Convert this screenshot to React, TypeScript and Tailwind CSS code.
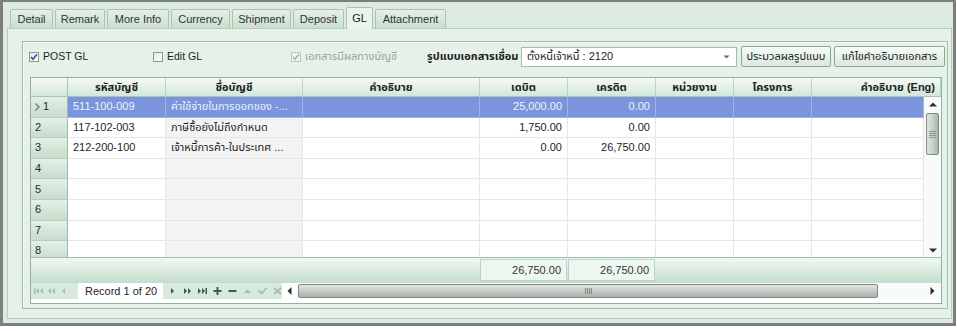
import React from "react";

const tabs = [
  { label: "Detail", w: "w-[43px]" },
  { label: "Remark", w: "w-[50px]" },
  { label: "More Info", w: "w-[62px]" },
  { label: "Currency", w: "w-[59px]" },
  { label: "Shipment", w: "w-[59px]" },
  { label: "Deposit", w: "w-[51px]" },
  { label: "GL", w: "w-[27px]", active: true },
  { label: "Attachment", w: "w-[71px]" },
];

type Col = { head: string; w: string; hw: string; right?: boolean; gray?: boolean; headRight?: boolean };
const cols: Col[] = [
  { head: "รหัสบัญชี", w: "w-[98px]", hw: "w-[98px]" },
  { head: "ชื่อบัญชี", w: "w-[137px]", hw: "w-[137px]", gray: true },
  { head: "คำอธิบาย", w: "w-[177px]", hw: "w-[177px]" },
  { head: "เดบิต", w: "w-[88px]", hw: "w-[88px]", right: true },
  { head: "เครดิต", w: "w-[88px]", hw: "w-[88px]", right: true },
  { head: "หน่วยงาน", w: "w-[78px]", hw: "w-[78px]" },
  { head: "โครงการ", w: "w-[78px]", hw: "w-[78px]" },
  { head: "คำอธิบาย (Eng)", w: "w-[112px]", hw: "flex-1", headRight: true },
];

const rows: string[][] = [
  ["511-100-009", "ค่าใช้จ่ายในการออกของ  -...", "", "25,000.00", "0.00", "", "", ""],
  ["117-102-003", "ภาษีซื้อยังไม่ถึงกำหนด", "", "1,750.00", "0.00", "", "", ""],
  ["212-200-100", "เจ้าหนี้การค้า-ในประเทศ   ...", "", "0.00", "26,750.00", "", "", ""],
  ["", "", "", "", "", "", "", ""],
  ["", "", "", "", "", "", "", ""],
  ["", "", "", "", "", "", "", ""],
  ["", "", "", "", "", "", "", ""],
  ["", "", "", "", "", "", "", ""],
];

function Check({ checked, disabled }: { checked?: boolean; disabled?: boolean }) {
  return (
    <div
      className={
        "w-[10px] h-[10px] border flex items-center justify-center " +
        (disabled ? "border-[#b9c6bd] bg-[#f1f4f2]" : "border-[#8a9a90] bg-gradient-to-br from-[#e4e8e6] to-white")
      }
    >
      {checked && (
        <svg width="8" height="8" viewBox="0 0 8 8">
          <path
            d="M1 4 L3 6.2 L7 1.2"
            fill="none"
            stroke={disabled ? "#a8b3ac" : "#3552a6"}
            strokeWidth="1.6"
          />
        </svg>
      )}
    </div>
  );
}

const dark = "#3f5c48";
const dim = "#a7bcae";

function NavIcon({ kind }: { kind: string }) {
  const c = ["next", "nextpage", "last", "plus", "minus"].includes(kind) ? dark : dim;
  let el: React.ReactNode = null;
  switch (kind) {
    case "first":
      el = (
        <g fill={c}>
          <rect x="0" y="1" width="1.5" height="6" />
          <path d="M5 1 L2 4 L5 7Z" />
          <path d="M9 1 L6 4 L9 7Z" />
        </g>
      );
      break;
    case "prevpage":
      el = (
        <g fill={c}>
          <path d="M4 1 L1 4 L4 7Z" />
          <path d="M8 1 L5 4 L8 7Z" />
        </g>
      );
      break;
    case "prev":
      el = <path d="M5 1 L2 4 L5 7Z" fill={c} />;
      break;
    case "next":
      el = <path d="M3 1 L6 4 L3 7Z" fill={c} />;
      break;
    case "nextpage":
      el = (
        <g fill={c}>
          <path d="M1 1 L4 4 L1 7Z" />
          <path d="M5 1 L8 4 L5 7Z" />
        </g>
      );
      break;
    case "last":
      el = (
        <g fill={c}>
          <path d="M0 1 L3 4 L0 7Z" />
          <path d="M4 1 L7 4 L4 7Z" />
          <rect x="7.5" y="1" width="1.5" height="6" />
        </g>
      );
      break;
    case "plus":
      el = (
        <g fill={c}>
          <rect x="0.5" y="3" width="8" height="2" />
          <rect x="3.5" y="0" width="2" height="8" />
        </g>
      );
      break;
    case "minus":
      el = <rect x="0.5" y="3" width="8" height="2" fill={c} />;
      break;
    case "up":
      el = <path d="M1 6 L4.5 2.5 L8 6Z" fill={c} />;
      break;
    case "ok":
      el = <path d="M0.5 3.5 L3.5 6.5 L8.5 1" fill="none" stroke={c} strokeWidth="1.8" />;
      break;
    case "cancel":
      el = <path d="M1 1 L8 7 M8 1 L1 7" fill="none" stroke={c} strokeWidth="1.8" />;
      break;
  }
  return (
    <svg width="9" height="8" viewBox="0 0 9 8">
      {el}
    </svg>
  );
}

export default function App() {
  return (
    <div className="w-[957px] h-[331px] bg-white font-['Liberation_Sans','Noto_Sans_Thai','Tahoma','DejaVu_Sans',sans-serif] text-[11px] text-[#1e1e1e] leading-none">
      <div className="w-[956px] h-[326px] border-x-[3px] border-t-2 border-b-[3px] border-[#7e7e7e] bg-[#dbebe0] flex flex-col">
        {/* Tabs */}
        <div className="h-[26px] flex items-end pl-[7px] gap-[2px] relative z-10">
          {tabs.map((t) =>
            t.active ? (
              <div
                key={t.label}
                className={
                  t.w +
                  " h-[22px] -mb-px border border-b-0 border-[#a9c4b1] rounded-t-[2px] bg-[#e9f4ec] flex items-center justify-center text-[#1b1b1b]"
                }
              >
                {t.label}
              </div>
            ) : (
              <div
                key={t.label}
                className={
                  t.w +
                  " h-[19px] border border-b-0 border-[#a9c4b1] rounded-t-[2px] bg-gradient-to-b from-[#e4f0e8] to-[#c9dfcf] flex items-center justify-center text-[#333]"
                }
              >
                {t.label}
              </div>
            )
          )}
        </div>

        {/* Tab panel */}
        <div className="ml-[4px] mr-[1px] mb-[4px] flex-1 border border-[#b3cdb9] bg-[#e5f1e9] pt-[12px] pl-[14px] pr-[3px] pb-[9px] flex flex-col">
          {/* Group box */}
          <div className="flex-1 border border-[#9fbda8] flex flex-col pt-[4px] pb-[4px] pl-[7px] pr-[5px] shadow-[inset_1px_1px_0_#f4faf6]">
            {/* controls row */}
            <div className="h-[21px] flex items-center -ml-px -mr-[4px]">
              <div className="w-[124px] flex items-center gap-[4px]">
                <Check checked />
                <span className="text-[10.5px]">POST GL</span>
              </div>
              <div className="w-[138px] flex items-center gap-[4px]">
                <Check />
                <span className="text-[10.5px]">Edit GL</span>
              </div>
              <div className="w-[136px] flex items-center gap-[4px]">
                <Check checked disabled />
                <span className="text-[#98a69d]">เอกสารมีผลทางบัญชี</span>
              </div>
              <div className="w-[94px] font-bold whitespace-nowrap">รูปแบบเอกสารเชื่อม</div>
              <div className="w-[216px] h-[20px] border border-[#a5bcad] bg-white flex items-center pl-[5px] pr-[6px]">
                <span className="flex-1">ตั้งหนี้เจ้าหนี้ : 2120</span>
                <svg width="7" height="4" viewBox="0 0 7 4">
                  <path d="M0.5 0.5 L3.5 3.5 L6.5 0.5Z" fill="#6b6b6b" />
                </svg>
              </div>
              <div className="ml-[4px] w-[90px] h-[21px] border border-[#8da795] rounded-[2px] bg-gradient-to-b from-[#f7fbf8] to-[#d9e9de] flex items-center justify-center whitespace-nowrap">
                ประมวลผลรูปแบบ
              </div>
              <div className="ml-[3px] w-[111px] h-[21px] border border-[#8da795] rounded-[2px] bg-gradient-to-b from-[#f7fbf8] to-[#d9e9de] flex items-center justify-center whitespace-nowrap">
                แก้ไขคำอธิบายเอกสาร
              </div>
            </div>

            {/* Grid */}
            <div className="mt-[10px] flex-1 border border-[#8fb29a] flex flex-col bg-white">
              {/* header */}
              <div className="h-[19px] flex bg-gradient-to-b from-[#f5faf6] to-[#d3e7d9] border-b border-[#a9c6b1] font-bold text-[#222]">
                <div className="w-[37px] border-r border-[#aac6b2]" />
                {cols.map((c) => (
                  <div
                    key={c.head}
                    className={
                      c.hw +
                      " border-r border-[#bcd4c3] flex items-center px-[5px] whitespace-nowrap " +
                      (c.headRight ? "justify-end" : "justify-center")
                    }
                  >
                    {c.head}
                  </div>
                ))}
              </div>

              {/* body */}
              <div className="h-[160px] flex overflow-hidden">
                <div className="flex-1 flex flex-col overflow-hidden">
                  {rows.map((r, i) => {
                    const sel = i === 0;
                    return (
                      <div key={i} className="h-[20.6px] shrink-0 flex">
                        <div className="w-[37px] border-r border-b border-r-[#9dbba6] border-b-[#b7cfbd] bg-gradient-to-b from-[#e3f0e7] to-[#c6ddcc] flex items-center pl-[4px] text-[#2a2a2a] gap-[3px]">
                          {sel && (
                            <svg width="5" height="8" viewBox="0 0 5 8">
                              <path d="M0.5 0.5 L4 4 L0.5 7.5" fill="none" stroke="#5f8a6c" strokeWidth="1.4" />
                            </svg>
                          )}
                          <span>{i + 1}</span>
                        </div>
                        {cols.map((c, j) => (
                          <div
                            key={j}
                            className={
                              c.w +
                              " border-r border-b flex items-center px-[5px] whitespace-nowrap overflow-hidden " +
                              (c.right ? "justify-end " : "") +
                              (sel
                                ? "bg-[#7b95dd] text-[#eef2fb] border-[#a3b5e6]"
                                : (c.gray ? "bg-[#f3f3f3] " : "bg-white ") + "border-[#e0e9e3]")
                            }
                          >
                            {r[j]}
                          </div>
                        ))}
                      </div>
                    );
                  })}
                </div>
                {/* vertical scrollbar */}
                <div className="w-[17px] bg-[#f9fbfa] flex flex-col items-center">
                  <div className="h-[14px] flex items-center justify-center">
                    <svg width="8" height="5" viewBox="0 0 8 5">
                      <path d="M0 4.5 L4 0.5 L8 4.5Z" fill="#2e2e2e" />
                    </svg>
                  </div>
                  <div className="mt-[2px] w-[13px] h-[42px] rounded-[2px] border border-[#7f8a83] bg-gradient-to-r from-[#dfe5e1] via-[#c9d2cc] to-[#aab5ae] flex flex-col items-center justify-center gap-[1px]">
                    <div className="w-[7px] h-px bg-[#8d968f]" />
                    <div className="w-[7px] h-px bg-[#8d968f]" />
                    <div className="w-[7px] h-px bg-[#8d968f]" />
                    <div className="w-[7px] h-px bg-[#8d968f]" />
                  </div>
                  <div className="flex-1" />
                  <div className="h-[14px] flex items-center justify-center">
                    <svg width="8" height="5" viewBox="0 0 8 5">
                      <path d="M0 0.5 L4 4.5 L8 0.5Z" fill="#2e2e2e" />
                    </svg>
                  </div>
                </div>
              </div>

              {/* footer */}
              <div className="h-[25px] flex items-center border-t border-[#9fbea8] bg-gradient-to-b from-[#f1f8f3] to-[#c6dfcd]">
                <div className="w-[449px]" />
                <div className="w-[87px] h-[22px] border border-[#b9d3c0] bg-[#eef6f1] flex items-center justify-end pr-[5px] text-[#333]">
                  26,750.00
                </div>
                <div className="ml-[1px] w-[87px] h-[22px] border border-[#b9d3c0] bg-[#eef6f1] flex items-center justify-end pr-[5px] text-[#333]">
                  26,750.00
                </div>
              </div>

              {/* navigator */}
              <div className="h-[17px] flex items-center bg-[#d8eadd] border-t border-[#c4dccb]">
                <div className="w-[47px] flex items-center gap-[4px] pl-[3px]">
                  <NavIcon kind="first" />
                  <NavIcon kind="prevpage" />
                  <NavIcon kind="prev" />
                </div>
                <div className="w-[85px] h-[16px] bg-white flex items-center pl-[7px] text-[#1e1e1e] text-[11px]">
                  Record 1 of 20
                </div>
                <div className="flex items-center gap-[6px] pl-[5px] w-[119px]">
                  <NavIcon kind="next" />
                  <NavIcon kind="nextpage" />
                  <NavIcon kind="last" />
                  <NavIcon kind="plus" />
                  <NavIcon kind="minus" />
                  <NavIcon kind="up" />
                  <NavIcon kind="ok" />
                  <NavIcon kind="cancel" />
                </div>
                <div className="w-[14px] h-[16px] bg-white flex items-center justify-center">
                  <svg width="5" height="8" viewBox="0 0 5 8">
                    <path d="M4.5 0 L0.5 4 L4.5 8Z" fill="#2e2e2e" />
                  </svg>
                </div>
                <div className="flex-1 h-[16px] bg-[#f9fbfa] flex items-center pl-[2px]">
                  <div className="w-[580px] h-[14px] rounded-[2px] border border-[#7f8a83] bg-gradient-to-b from-[#e1e6e3] via-[#c3ccc6] to-[#a9b3ac] flex items-center justify-center gap-[1px]">
                    <div className="w-px h-[6px] bg-[#7f8a83]" />
                    <div className="w-px h-[6px] bg-[#7f8a83]" />
                    <div className="w-px h-[6px] bg-[#7f8a83]" />
                    <div className="w-px h-[6px] bg-[#7f8a83]" />
                  </div>
                  <div className="flex-1" />
                  <div className="w-[17px] flex items-center justify-center">
                    <svg width="5" height="8" viewBox="0 0 5 8">
                      <path d="M0.5 0 L4.5 4 L0.5 8Z" fill="#2e2e2e" />
                    </svg>
                  </div>
                </div>
              </div>
            </div>
          </div>
        </div>
      </div>
    </div>
  );
}
